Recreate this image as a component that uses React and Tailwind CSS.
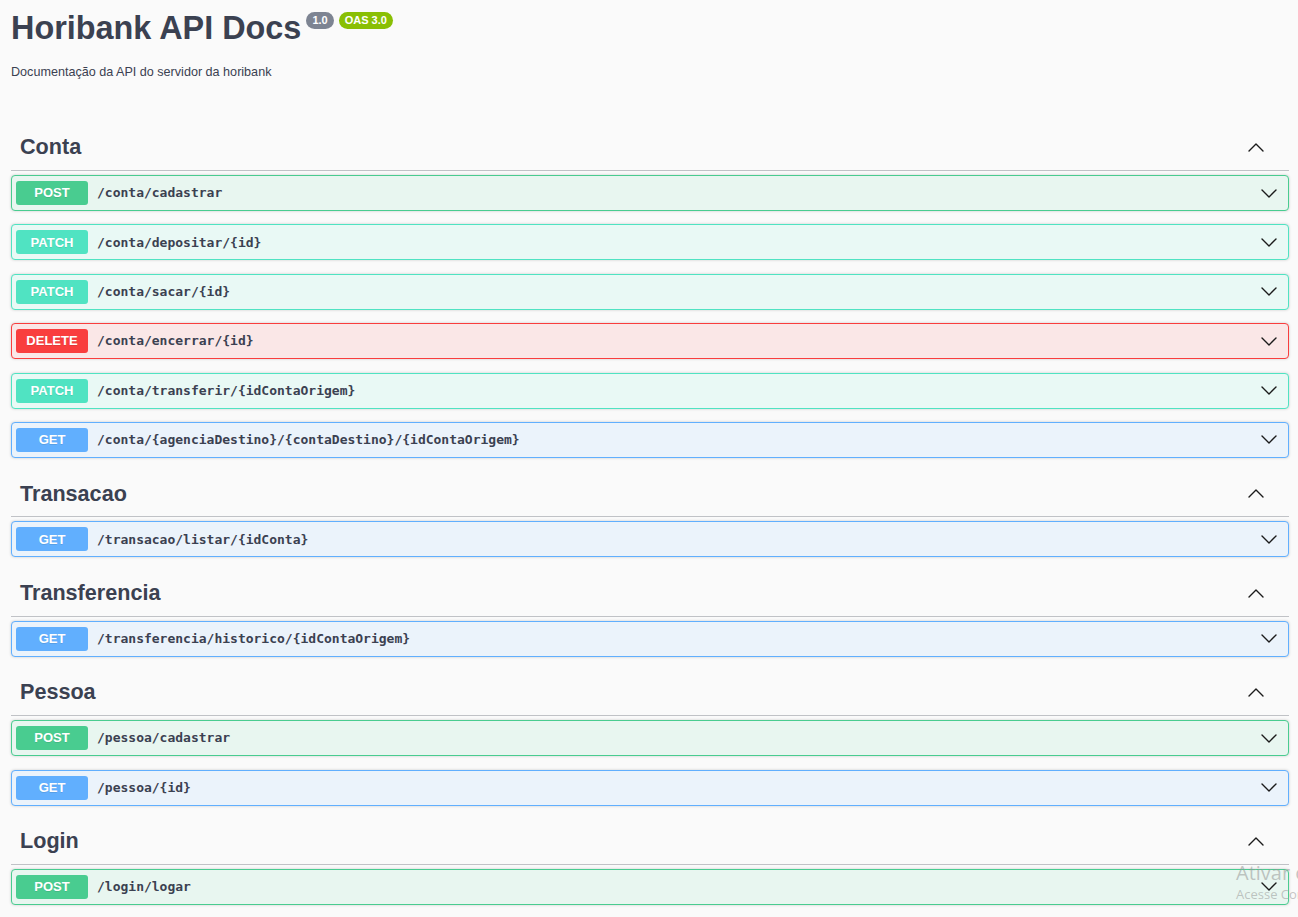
const sections = [
  {
    name: "Conta",
    ops: [
      { method: "POST", path: "/conta/cadastrar" },
      { method: "PATCH", path: "/conta/depositar/{id}" },
      { method: "PATCH", path: "/conta/sacar/{id}" },
      { method: "DELETE", path: "/conta/encerrar/{id}" },
      { method: "PATCH", path: "/conta/transferir/{idContaOrigem}" },
      { method: "GET", path: "/conta/{agenciaDestino}/{contaDestino}/{idContaOrigem}" },
    ],
  },
  { name: "Transacao", ops: [{ method: "GET", path: "/transacao/listar/{idConta}" }] },
  { name: "Transferencia", ops: [{ method: "GET", path: "/transferencia/historico/{idContaOrigem}" }] },
  {
    name: "Pessoa",
    ops: [
      { method: "POST", path: "/pessoa/cadastrar" },
      { method: "GET", path: "/pessoa/{id}" },
    ],
  },
  { name: "Login", ops: [{ method: "POST", path: "/login/logar" }] },
]

const styles = {
  POST: { block: "border-[#49cc90] bg-[#e8f6f0]", badge: "bg-[#49cc90]" },
  PATCH: { block: "border-[#50e3c2] bg-[#e9f9f5]", badge: "bg-[#50e3c2]" },
  DELETE: { block: "border-[#f93e3e] bg-[#fae7e7]", badge: "bg-[#f93e3e]" },
  GET: { block: "border-[#61affe] bg-[#ebf3fb]", badge: "bg-[#61affe]" },
}

// thin swagger-style chevron
function Arrow({ up }) {
  return (
    <svg width="16" height="9" viewBox="0 0 16 9" fill="none" className="shrink-0">
      <polyline
        points={up ? "1,8 8,1 15,8" : "1,1 8,8 15,1"}
        stroke="#1b1b1b"
        strokeWidth="1.4"
        strokeLinecap="round"
        strokeLinejoin="round"
      />
    </svg>
  )
}

function Opblock({ method, path }) {
  const s = styles[method]
  return (
    <div className={`flex items-center h-[36px] mb-[13.4px] border rounded-[4px] shadow-[0_0_3px_rgba(0,0,0,0.19)] px-[4px] ${s.block}`}>
      <span
        className={`w-[72px] h-[24px] flex items-center justify-center rounded-[3px] text-white text-[13px] font-bold [text-shadow:0_1px_0_rgba(0,0,0,0.1)] ${s.badge}`}
      >
        {method}
      </span>
      <span className="ml-[9px] flex-1 text-[13px] font-bold text-[#3b4151] font-['DejaVu_Sans_Mono',monospace]">
        {path}
      </span>
      <div className="mr-[7px]">
        <Arrow />
      </div>
    </div>
  )
}

export default function App() {
  return (
    <div className="min-h-screen bg-[#fafafa] pl-[11px] pr-[9px] font-['Liberation_Sans',Arial,sans-serif] text-[#3b4151] relative overflow-hidden">
      {/* Info */}
      <div className="pt-[8px] flex items-start">
        <h1 className="text-[32.4px] leading-[40px] font-bold text-[#3b4151]">Horibank API Docs</h1>
        <span className="ml-[5px] mt-[4px] h-[17px] px-[6px] rounded-full bg-[#7d8492] text-white text-[11px] font-bold flex items-center">
          1.0
        </span>
        <span className="ml-[5px] mt-[4px] h-[17px] px-[6px] rounded-full bg-[#89bf04] text-white text-[11px] font-bold flex items-center">
          OAS 3.0
        </span>
      </div>
      <p className="mt-[15px] text-[12.6px] leading-[18px] text-[#3b4151]">Documentação da API do servidor da horibank</p>

      <div className="mt-[44px]">
        {sections.map((sec) => (
          <div key={sec.name}>
            <div className="h-[46px] flex items-center justify-between border-b border-[rgba(59,65,81,0.3)] pl-[9px] pr-[25px] mb-[4px]">
              <h3 className="text-[21.6px] font-bold text-[#3b4151]">{sec.name}</h3>
              <Arrow up />
            </div>
            {sec.ops.map((op) => (
              <Opblock key={op.path} {...op} />
            ))}
          </div>
        ))}
      </div>

      {/* windows watermark */}
      <div className="absolute left-[1236px] top-[860px] whitespace-nowrap text-[rgba(150,150,150,0.55)] font-['Open_Sans',sans-serif]">
        <div className="text-[20px] leading-[26px]">Ativar o Windows</div>
        <div className="text-[13px] leading-[16px]">Acesse Configurações para ativar o Windows.</div>
      </div>
    </div>
  )
}
